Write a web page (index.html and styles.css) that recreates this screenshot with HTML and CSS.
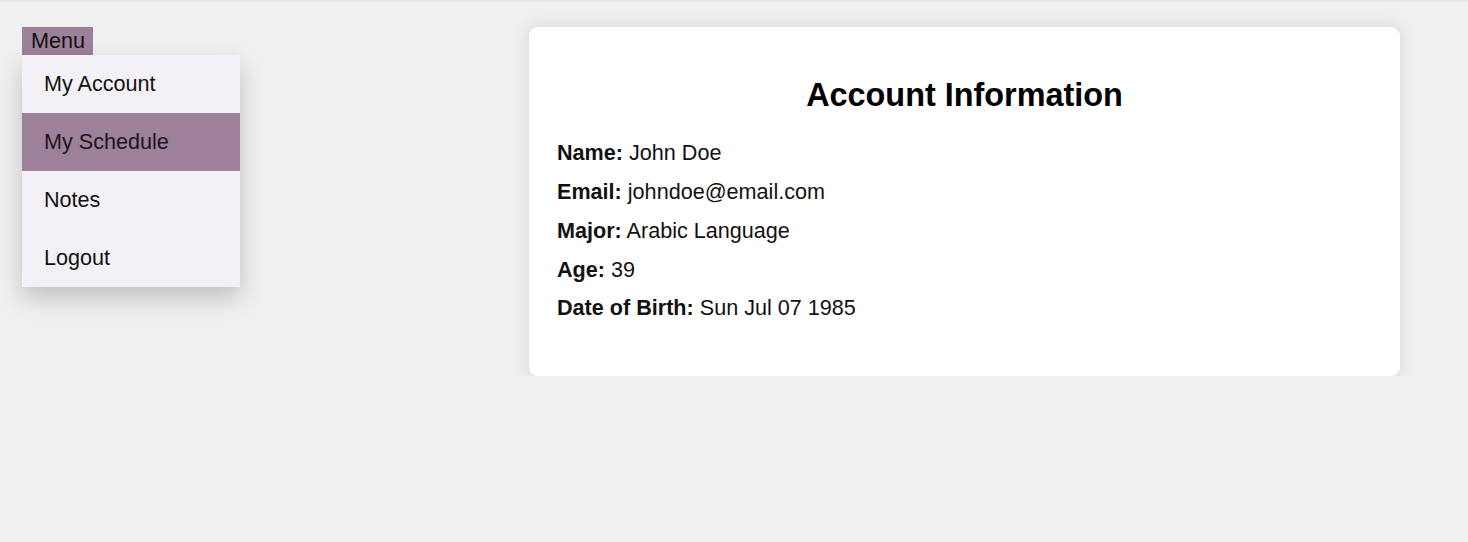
FILE: index.html
```html
<!DOCTYPE html>
<html lang="en">
<head>
<meta charset="utf-8">
<title>Account Information</title>
<link rel="stylesheet" href="styles.css">
</head>
<body>
<div class="page">
  <nav class="menu">
    <div class="menu-label">Menu</div>
    <ul class="menu-list">
      <li class="menu-item">My Account</li>
      <li class="menu-item active">My Schedule</li>
      <li class="menu-item">Notes</li>
      <li class="menu-item">Logout</li>
    </ul>
  </nav>
  <main class="card">
    <h2 class="card-title">Account Information</h2>
    <p class="info"><strong>Name:</strong> John Doe</p>
    <p class="info"><strong>Email:</strong> johndoe@email.com</p>
    <p class="info"><strong>Major:</strong> Arabic Language</p>
    <p class="info"><strong>Age:</strong> 39</p>
    <p class="info"><strong>Date of Birth:</strong> Sun Jul 07 1985</p>
  </main>
</div>
</body>
</html>
```

FILE: styles.css
```css
html, body {
  margin: 0;
  padding: 0;
}

body {
  background: #f0f0f0;
  font-family: "Liberation Sans", Arial, sans-serif;
  color: #111;
  border-top: 2px solid #e9e9e9;
}

.page {
  display: flex;
  align-items: flex-start;
  gap: 289px;
  padding: 25px 0 0 22px;
}

.menu {
  width: 218px;
  display: flex;
  flex-direction: column;
  align-items: flex-start;
}

.menu-label {
  background: #9d8099;
  font-size: 21.6px;
  line-height: 26px;
  padding: 1px 8px 1px 9px;
  color: #111;
}

.menu-list {
  list-style: none;
  margin: 0;
  padding: 0;
  width: 218px;
  background: #f3f1f5;
  box-shadow: 0 11px 22px rgba(0, 0, 0, 0.2);
}

.menu-item {
  font-size: 21.6px;
  line-height: 24.8px;
  padding: 16.6px 22px;
  color: #111;
}

.menu-item.active {
  background: #9d8099;
  color: #1e1420;
}

.card {
  width: 871px;
  box-sizing: border-box;
  background: #fff;
  border-radius: 9px;
  box-shadow: 0 0 14px 3px rgba(0, 0, 0, 0.08);
  padding: 50px 28px 41px 28px;
}

.card-title {
  margin: 0 0 27px 0;
  text-align: center;
  font-size: 32.4px;
  line-height: 37.2px;
  font-weight: bold;
  color: #000;
}

.info {
  margin: 0 0 14px 0;
  font-size: 21.6px;
  line-height: 24.8px;
  color: #111;
}

.info strong {
  font-weight: bold;
}
```
